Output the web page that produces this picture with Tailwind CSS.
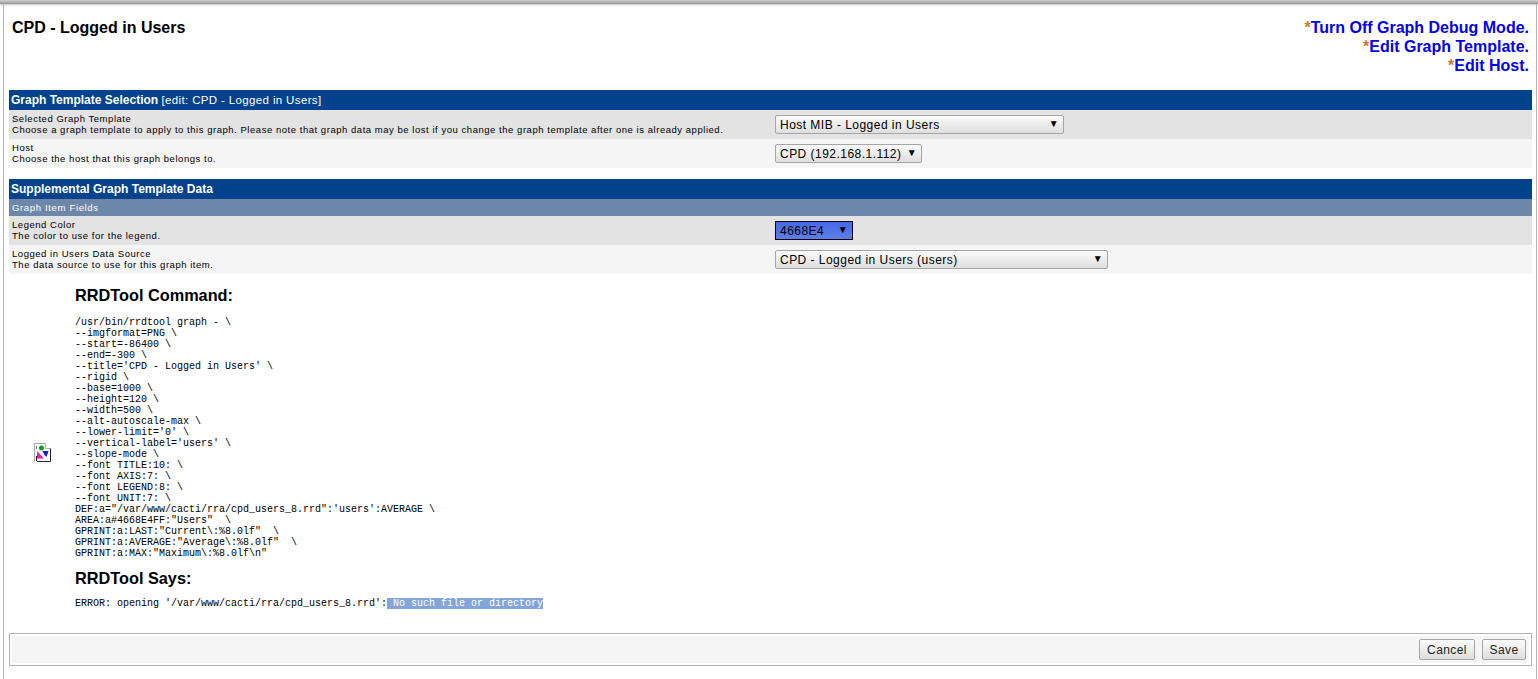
<!DOCTYPE html>
<html lang="en">
<head>
  <meta charset="UTF-8" />
  <title>CPD - Logged in Users</title>
  <script src="https://cdn.jsdelivr.net/npm/@tailwindcss/browser@4"></script>
</head>
<body class="bg-white text-black font-['Liberation_Sans',Arial,sans-serif] h-[679px] overflow-hidden">

  <!-- top edge of the frame -->
  <div class="h-[4px] bg-linear-to-b from-[#d0d0d0] to-[#989898] shadow-[0_1px_2px_#c4c4c4]"></div>

  <div class="h-[675px] ml-[3px] mr-[1px] border-l border-r border-[#b5b5b5] pl-[5px] pr-[4px]">

    <!-- title + action links -->
    <div class="h-[86px] flex justify-between pl-[3px] pr-[3px] pt-[14px]">
      <h1 class="text-[16px] leading-[19px] font-bold">CPD - Logged in Users</h1>
      <div class="text-right text-[16px] leading-[19px] font-bold text-[#0000ee]">
        <div><span class="text-[#c87a2b]">*</span><a href="#">Turn Off Graph Debug Mode.</a></div>
        <div><span class="text-[#c87a2b]">*</span><a href="#">Edit Graph Template.</a></div>
        <div><span class="text-[#c87a2b]">*</span><a href="#">Edit Host.</a></div>
      </div>
    </div>

    <!-- Graph Template Selection -->
    <div class="h-[20px] bg-[#00438c] text-white text-[12px] leading-[20px] pl-[2px]">
      <b>Graph Template Selection</b> <span class="text-[11.5px] tracking-[0.36px]">[edit: CPD - Logged in Users]</span>
    </div>
    <div class="h-[29px] bg-[#e3e3e3] flex items-center">
      <div class="w-[766px] pl-[3px] pb-[2px] text-[9.5px] leading-[11px] tracking-[0.535px]">
        <div>Selected Graph Template</div>
        <div>Choose a graph template to apply to this graph. Please note that graph data may be lost if you change the graph template after one is already applied.</div>
      </div>
      <div class="relative w-[289px] h-[19px] border border-[#a5a5a5] rounded-[2px] bg-linear-to-b from-[#fbfbfb] to-[#dedede] text-[12px] leading-[18px] tracking-[0.47px] pl-[4px]">
        Host MIB - Logged in Users<span class="absolute right-[4px] top-[-1px] text-[10px]">▼</span>
      </div>
    </div>
    <div class="h-[29px] bg-[#f5f5f5] flex items-center">
      <div class="w-[766px] pl-[3px] pb-[2px] text-[9.5px] leading-[11px] tracking-[0.535px]">
        <div>Host</div>
        <div>Choose the host that this graph belongs to.</div>
      </div>
      <div class="relative w-[147px] h-[19px] border border-[#a5a5a5] rounded-[2px] bg-linear-to-b from-[#fbfbfb] to-[#dedede] text-[12px] leading-[18px] tracking-[0.47px] pl-[4px]">
        CPD (192.168.1.112)<span class="absolute right-[4px] top-[-1px] text-[10px]">▼</span>
      </div>
    </div>

    <!-- Supplemental Graph Template Data -->
    <div class="mt-[11px] h-[20px] bg-[#00438c] text-white text-[12px] leading-[20px] pl-[2px] font-bold">Supplemental Graph Template Data</div>
    <div class="h-[17px] bg-[#6d87ab] text-white text-[9.5px] leading-[17px] tracking-[0.66px] pl-[3px]">Graph Item Fields</div>
    <div class="h-[29px] bg-[#e3e3e3] flex items-center">
      <div class="w-[766px] pl-[3px] pb-[2px] text-[9.5px] leading-[11px] tracking-[0.535px]">
        <div>Legend Color</div>
        <div>The color to use for the legend.</div>
      </div>
      <div class="relative w-[78px] h-[19px] border border-black bg-linear-to-b from-[#4668e4] to-[#5f7eea] text-[12px] leading-[18px] tracking-[0.47px] pl-[4px]">
        4668E4<span class="absolute right-[4px] top-[-1px] text-[10px]">▼</span>
      </div>
    </div>
    <div class="h-[29px] bg-[#f5f5f5] flex items-center">
      <div class="w-[766px] pl-[3px] pb-[2px] text-[9.5px] leading-[11px] tracking-[0.535px]">
        <div>Logged in Users Data Source</div>
        <div>The data source to use for this graph item.</div>
      </div>
      <div class="relative w-[333px] h-[19px] border border-[#a5a5a5] rounded-[2px] bg-linear-to-b from-[#fbfbfb] to-[#dedede] text-[12px] leading-[18px] tracking-[0.47px] pl-[4px]">
        CPD - Logged in Users (users)<span class="absolute right-[4px] top-[-1px] text-[10px]">▼</span>
      </div>
    </div>

    <!-- broken graph image + rrdtool output -->
    <div class="h-[359px] flex">
      <div class="w-[66px] flex items-center pl-[25px] pb-[2px]">
        <svg width="17" height="19" viewBox="0 0 17 19">
          <path d="M1 18V1h10l5 5v12z" fill="#fff" />
          <path d="M.5 18.500V.5h11" fill="none" stroke="#a8a8a8" />
          <path d="M11.500.5v5h5" fill="none" stroke="#b5b5b5" />
          <path d="M16.500 5.500v13H3" fill="none" stroke="#222" />
          <path d="M2.500 18V13" fill="none" stroke="#222" />
          <path d="M2.500 3v3" fill="none" stroke="#777" />
          <circle cx="7.500" cy="5" r="2.500" fill="#0a9a2a" />
          <path d="M8.500 8h6l-2 6-2-2z" fill="#1a1ae0" />
          <path d="M3 8l7 7.500H3z" fill="#e81ea8" />
        </svg>
      </div>
      <div>
        <h2 class="mt-[11px] text-[16.300px] leading-[20px] font-bold">RRDTool Command:</h2>
        <pre class="mt-[12px] font-['Liberation_Mono',monospace] text-[10px] leading-[11px]">/usr/bin/rrdtool graph - \
--imgformat=PNG \
--start=-86400 \
--end=-300 \
--title='CPD - Logged in Users' \
--rigid \
--base=1000 \
--height=120 \
--width=500 \
--alt-autoscale-max \
--lower-limit='0' \
--vertical-label='users' \
--slope-mode \
--font TITLE:10: \
--font AXIS:7: \
--font LEGEND:8: \
--font UNIT:7: \
DEF:a="/var/www/cacti/rra/cpd_users_8.rrd":'users':AVERAGE \
AREA:a#4668E4FF:"Users"  \
GPRINT:a:LAST:"Current\:%8.0lf"  \
GPRINT:a:AVERAGE:"Average\:%8.0lf"  \
GPRINT:a:MAX:"Maximum\:%8.0lf\n"</pre>
        <h2 class="mt-[9px] text-[16.300px] leading-[20px] font-bold">RRDTool Says:</h2>
        <pre class="mt-[10px] font-['Liberation_Mono',monospace] text-[10px] leading-[11px]">ERROR: opening '/var/www/cacti/rra/cpd_users_8.rrd':<span class="bg-[#84a5d8] text-white"> No such file or directory</span></pre>
      </div>
    </div>

    <!-- save bar -->
    <div class="h-[33px] border border-[#b5b5b5] p-[2px]">
      <div class="h-full bg-[#f5f5f5] flex justify-end items-center gap-[7px] pr-[3px]">
        <button class="w-[56px] h-[21px] border border-[#a5a5a5] rounded-[2px] bg-linear-to-b from-[#fbfbfb] to-[#dedede] text-[12px] tracking-[0.4px] text-[#222]">Cancel</button>
        <button class="w-[44px] h-[21px] border border-[#a5a5a5] rounded-[2px] bg-linear-to-b from-[#fbfbfb] to-[#dedede] text-[12px] tracking-[0.4px] text-[#222]">Save</button>
      </div>
    </div>
  </div>
</body>
</html>
